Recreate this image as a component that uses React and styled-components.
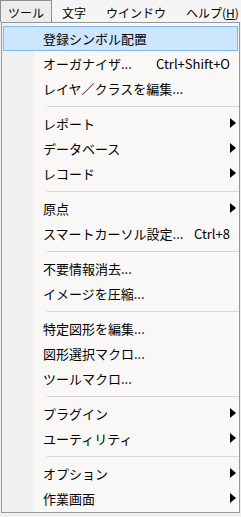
import React from "react";
import styled, { createGlobalStyle } from "styled-components";

const Global = createGlobalStyle`
  html, body {
    margin: 0;
    padding: 0;
    background: #f0f0f0;
  }
  body {
    font-family: "Noto Sans CJK JP", "Noto Sans", sans-serif;
    color: #000;
  }
`;

const MenuBar = styled.div`
  display: flex;
  height: 22px;
  background: #f5f5f5;
  font-size: 12px;
`;

const BarItem = styled.div`
  display: flex;
  align-items: center;
  padding: 1px ${({ open }) => (open ? "7px" : "9px")} 0;
  box-sizing: border-box;
  height: 22px;
  border: 1px solid ${({ open }) => (open ? "#8f8f8f" : "transparent")};
  border-bottom: none;
  background: ${({ open }) => (open ? "#ececec" : "transparent")};
  white-space: nowrap;
  u {
    text-decoration: underline;
  }
`;

const Dropdown = styled.div`
  margin-left: 1px;
  width: 239px;
  box-sizing: border-box;
  border: 1px solid #979797;
  padding: 3px 0 1px;
  background: linear-gradient(to right, #f0f0f0 32px, #f9f8f7 32px);
  font-size: 13px;
`;

const Item = styled.div`
  display: flex;
  align-items: center;
  height: 25px;
  box-sizing: border-box;
  margin: 0 1px;
  padding-left: 39px;
  border: 1px solid ${({ active }) => (active ? "#7db9f0" : "transparent")};
  background: ${({ active }) => (active ? "#cce6fe" : "transparent")};
  white-space: nowrap;
`;

const Label = styled.span`
  flex: 1;
`;

const Shortcut = styled.span`
  margin-right: 7px;
`;

const Arrow = styled.span`
  width: 0;
  height: 0;
  margin-right: 1px;
  border-top: 5px solid transparent;
  border-bottom: 5px solid transparent;
  border-left: 6px solid #000;
  margin-top: -2px;
`;

const Separator = styled.div`
  height: 1px;
  margin: 5px 0 4px 45px;
  background: #d4d4d4;
`;

const menu = [
  { label: "登録シンボル配置", active: true },
  { label: "オーガナイザ...", key: "Ctrl+Shift+O" },
  { label: "レイヤ／クラスを編集..." },
  "-",
  { label: "レポート", sub: true },
  { label: "データベース", sub: true },
  { label: "レコード", sub: true },
  "-",
  { label: "原点", sub: true },
  { label: "スマートカーソル設定...", key: "Ctrl+8" },
  "-",
  { label: "不要情報消去..." },
  { label: "イメージを圧縮..." },
  "-",
  { label: "特定図形を編集..." },
  { label: "図形選択マクロ..." },
  { label: "ツールマクロ..." },
  "-",
  { label: "プラグイン", sub: true },
  { label: "ユーティリティ", sub: true },
  "-",
  { label: "オプション", sub: true },
  { label: "作業画面", sub: true },
];

export default function App() {
  return (
    <>
      <Global />
      <MenuBar>
        <BarItem open>ツール</BarItem>
        <BarItem>文字</BarItem>
        <BarItem>ウインドウ</BarItem>
        <BarItem>
          ヘルプ(<u>H</u>)
        </BarItem>
      </MenuBar>
      <Dropdown>
        {menu.map((m, i) =>
          m === "-" ? (
            <Separator key={i} />
          ) : (
            <Item key={i} active={m.active}>
              <Label>{m.label}</Label>
              {m.key && <Shortcut>{m.key}</Shortcut>}
              {m.sub && <Arrow />}
            </Item>
          )
        )}
      </Dropdown>
    </>
  );
}
